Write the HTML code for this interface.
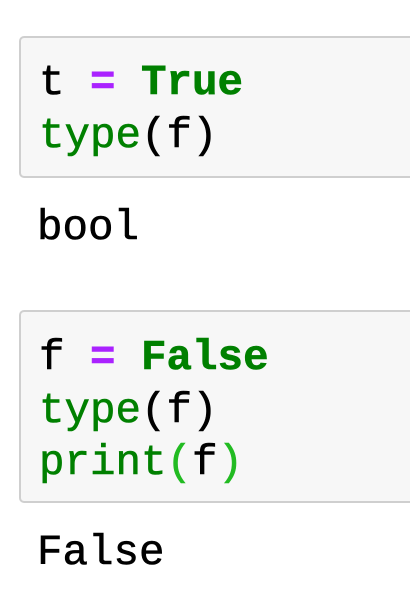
<!DOCTYPE html>
<html><head><meta charset="utf-8"><style>
html,body{margin:0;padding:0;background:#fff;width:410px;height:594px;overflow:hidden}
.box{position:absolute;left:19px;width:420px;background:#f7f7f7;border:2px solid #cfcfcf;border-radius:5px;box-sizing:border-box}
.l{position:absolute;left:39px;font-family:"Courier New","Nimbus Mono PS","Nimbus Mono L","FreeMono","Liberation Mono",monospace;font-size:42.5px;line-height:42px;color:#000;white-space:pre;-webkit-text-stroke:0.6px currentColor}
.g{color:#008000}.b{font-weight:bold}.p{color:#aa22ff;font-weight:bold}.pp{color:#22bb22}
</style></head><body>
<div class="box" style="top:36px;height:142px"></div>
<div class="l" style="top:62px">t <span class="p">=</span> <span class="g b">True</span></div>
<div class="l" style="top:115px"><span class="g">type</span>(f)</div>
<div class="l" style="top:207px;left:37px">bool</div>
<div class="box" style="top:310px;height:193px"></div>
<div class="l" style="top:337px">f <span class="p">=</span> <span class="g b">False</span></div>
<div class="l" style="top:390px"><span class="g">type</span>(f)</div>
<div class="l" style="top:442px"><span class="g">print</span><span class="pp">(</span>f<span class="pp">)</span></div>
<div class="l" style="top:532px;left:37px">False</div>
</body></html>
